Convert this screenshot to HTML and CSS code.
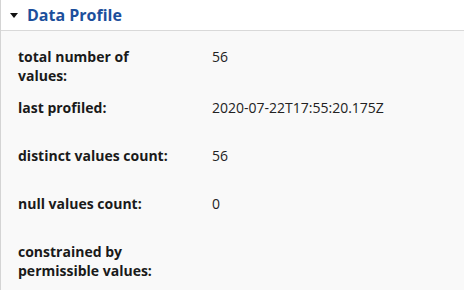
FILE: index.html
```html
<!DOCTYPE html>
<html>
<head>
<meta charset="utf-8">
<link rel="stylesheet" href="styles.css">
</head>
<body>
<section class="panel">
  <header class="panel-header">
    <span class="caret"></span>
    <h2 class="title">Data Profile</h2>
  </header>
  <div class="panel-body">
    <div class="row row-first"><div class="label">total number of values:</div><div class="value">56</div></div>
    <div class="row"><div class="label">last profiled:</div><div class="value">2020-07-22T17:55:20.175Z</div></div>
    <div class="row"><div class="label">distinct values count:</div><div class="value">56</div></div>
    <div class="row"><div class="label">null values count:</div><div class="value">0</div></div>
    <div class="row"><div class="label">constrained by permissible values:</div><div class="value"></div></div>
  </div>
</section>
</body>
</html>
```
FILE: styles.css
```css
html, body {
  margin: 0;
  padding: 0;
  background: #ffffff;
}
body {
  font-family: "Open Sans", "Liberation Sans", sans-serif;
  color: #222;
}
.panel {
  border-left: 1px solid #d4d4d4;
  height: 290px;
  box-sizing: border-box;
  overflow: hidden;
}
.panel-header {
  display: flex;
  align-items: center;
  height: 31px;
  background: #fff;
  border-bottom: 1px solid #d9d9d9;
  padding-left: 9px;
  padding-bottom: 1px;
  box-sizing: border-box;
}
.caret {
  width: 0;
  height: 0;
  border-left: 4px solid transparent;
  border-right: 4px solid transparent;
  border-top: 5px solid #111;
  margin-right: 9px;
  margin-top: 1px;
}
.title {
  margin: 0;
  font-size: 16px;
  font-weight: 700;
  color: #1c4f9c;
}
.panel-body {
  background: #f9f9f9;
  height: 100%;
  padding: 16px 0 0 17px;
}
.row {
  display: flex;
  min-height: 38px;
  margin-bottom: 10px;
  font-size: 14px;
  line-height: 19px;
}
.row-first {
  margin-bottom: 13px;
}
.label {
  width: 158px;
  font-weight: 700;
  color: #1a1a1a;
}
.value {
  margin-left: 36px;
  color: #222;
}
```
